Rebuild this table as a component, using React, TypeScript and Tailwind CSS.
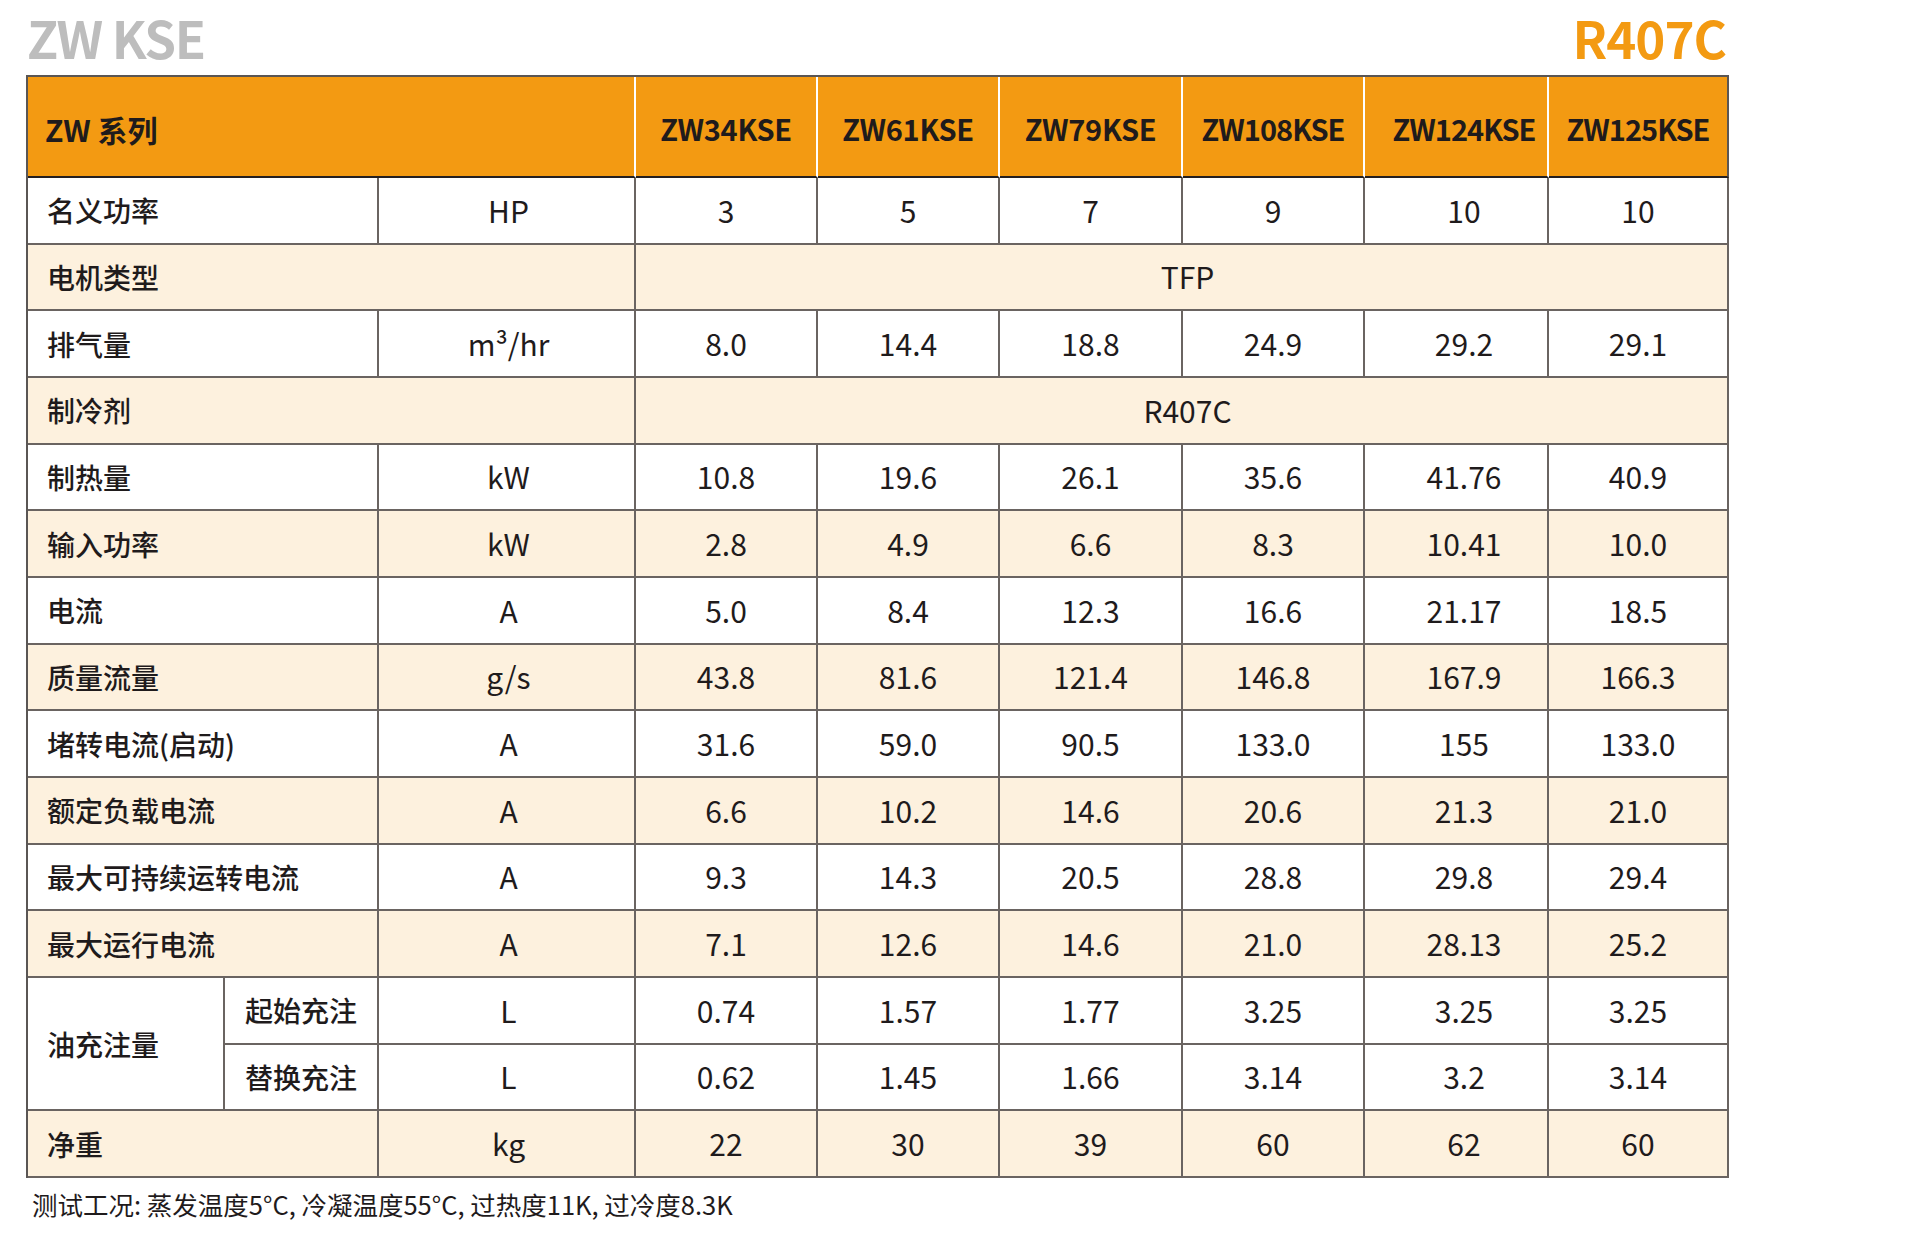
import React from 'react';

const models = ['ZW34KSE', 'ZW61KSE', 'ZW79KSE', 'ZW108KSE', 'ZW124KSE', 'ZW125KSE'];

type Row =
  | { label: string; unit: string; vals: string[]; cream?: boolean }
  | { label: string; span: string; cream?: boolean };

const rows: Row[] = [
  { label: '名义功率', unit: 'HP', vals: ['3', '5', '7', '9', '10', '10'] },
  { label: '电机类型', span: 'TFP', cream: true },
  { label: '排气量', unit: 'm³/hr', vals: ['8.0', '14.4', '18.8', '24.9', '29.2', '29.1'] },
  { label: '制冷剂', span: 'R407C', cream: true },
  { label: '制热量', unit: 'kW', vals: ['10.8', '19.6', '26.1', '35.6', '41.76', '40.9'] },
  { label: '输入功率', unit: 'kW', vals: ['2.8', '4.9', '6.6', '8.3', '10.41', '10.0'], cream: true },
  { label: '电流', unit: 'A', vals: ['5.0', '8.4', '12.3', '16.6', '21.17', '18.5'] },
  { label: '质量流量', unit: 'g/s', vals: ['43.8', '81.6', '121.4', '146.8', '167.9', '166.3'], cream: true },
  { label: '堵转电流(启动)', unit: 'A', vals: ['31.6', '59.0', '90.5', '133.0', '155', '133.0'] },
  { label: '额定负载电流', unit: 'A', vals: ['6.6', '10.2', '14.6', '20.6', '21.3', '21.0'], cream: true },
  { label: '最大可持续运转电流', unit: 'A', vals: ['9.3', '14.3', '20.5', '28.8', '29.8', '29.4'] },
  { label: '最大运行电流', unit: 'A', vals: ['7.1', '12.6', '14.6', '21.0', '28.13', '25.2'], cream: true },
];

const oil = [
  { label: '起始充注', unit: 'L', vals: ['0.74', '1.57', '1.77', '3.25', '3.25', '3.25'] },
  { label: '替换充注', unit: 'L', vals: ['0.62', '1.45', '1.66', '3.14', '3.2', '3.14'] },
];

const weight = { label: '净重', unit: 'kg', vals: ['22', '30', '39', '60', '62', '60'] };

const cell = 'border-r-2 border-b-2 border-[#6a6461] flex items-center';
const num = 'justify-center text-[30px]';
const label = 'pl-[19px] text-[28px] font-medium';

function bg(cream?: boolean) {
  return cream ? 'bg-[#fdf1de]' : 'bg-white';
}

// the fifth model column sits a little right of centre in the source sheet
function shift(i: number) {
  return i === 4 ? 'pl-[16px]' : '';
}

export default function App() {
  return (
    <div className="min-h-[1242px] bg-white pl-[26px] font-['Noto_Sans_CJK_SC',sans-serif] text-[#1f1b1c]">
      {/* Title line */}
      <div className="w-[1703px] h-[75px] flex items-center justify-between font-bold text-[51px] leading-[1.4] pt-[2px] pb-[2px]">
        <span className="text-[#bdbdbd] tracking-[-1.5px] pl-[1px]">ZW KSE</span>
        <span className="text-[#f39a12] tracking-[-1px] pr-[3px]">R407C</span>
      </div>

      {/* Spec table */}
      <div className="grid w-[1703px] grid-cols-[197px_154px_257px_182px_182px_183px_182px_184px_180px] grid-rows-[101px_repeat(15,66.667px)] border-l-2 border-t-2 border-[#5a5654]">
        <div className="col-span-3 bg-[#f39a12] border-r-2 border-white border-b-2 border-b-[#231f20] flex items-center pl-[17px] pt-[5px] font-bold text-[30px]">
          ZW 系列
        </div>
        {models.map((m, i) => (
          <div
            key={m}
            className={`bg-[#f39a12] border-b-2 border-b-[#231f20] border-r-2 flex items-center justify-center pt-[5px] font-bold text-[29px] ${shift(i)} ${
              i === models.length - 1 ? 'border-r-[#5a5654]' : 'border-r-white'
            } ${m.length > 7 ? 'tracking-[-1px]' : 'tracking-[-0.3px]'}`}
          >
            {m}
          </div>
        ))}

        {rows.map((r) =>
          'span' in r ? (
            <React.Fragment key={r.label}>
              <div className={`${cell} ${bg(r.cream)} col-span-3 ${label}`}>{r.label}</div>
              <div className={`${cell} ${num} ${bg(r.cream)} col-span-6 pl-[12px] text-[28px]`}>{r.span}</div>
            </React.Fragment>
          ) : (
            <React.Fragment key={r.label}>
              <div className={`${cell} ${bg(r.cream)} col-span-2 ${label}`}>{r.label}</div>
              <div className={`${cell} ${num} ${bg(r.cream)} pl-[4px] text-[28px]`}>{r.unit}</div>
              {r.vals.map((v, i) => (
                <div key={i} className={`${cell} ${num} ${bg(r.cream)} ${shift(i)}`}>
                  {v}
                </div>
              ))}
            </React.Fragment>
          )
        )}

        {/* Oil charge rows */}
        <div className={`${cell} bg-white row-span-2 ${label}`}>油充注量</div>
        {oil.map((o) => (
          <React.Fragment key={o.label}>
            <div className={`${cell} bg-white justify-center text-[28px] font-medium`}>{o.label}</div>
            <div className={`${cell} ${num} bg-white pl-[4px] text-[28px]`}>{o.unit}</div>
            {o.vals.map((v, i) => (
              <div key={i} className={`${cell} ${num} bg-white ${shift(i)}`}>
                {v}
              </div>
            ))}
          </React.Fragment>
        ))}

        <div className={`${cell} bg-[#fdf1de] col-span-2 ${label}`}>{weight.label}</div>
        <div className={`${cell} ${num} bg-[#fdf1de] pl-[4px] text-[28px]`}>{weight.unit}</div>
        {weight.vals.map((v, i) => (
          <div key={i} className={`${cell} ${num} bg-[#fdf1de] ${shift(i)}`}>
            {v}
          </div>
        ))}
      </div>

      <p className="pt-[10px] pl-[6px] text-[25.5px] leading-[32px]">
        测试工况: 蒸发温度5°C, 冷凝温度55°C, 过热度11K, 过冷度8.3K
      </p>
    </div>
  );
}
